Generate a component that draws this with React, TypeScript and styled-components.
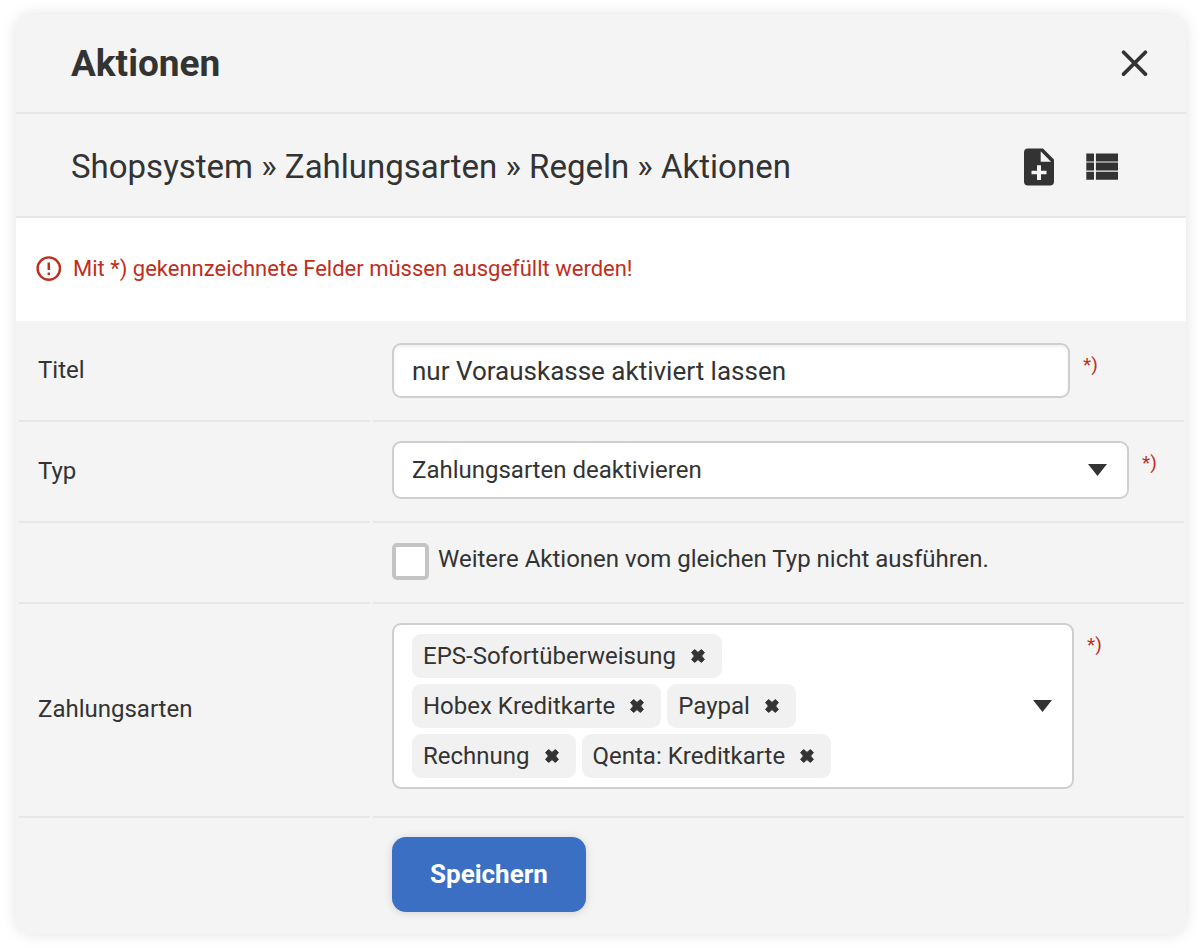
import React from 'react';
import styled, { createGlobalStyle, css } from 'styled-components';

const ink = '#333333';
const danger = '#bf2e1c';
const line = '#e7e7e7';
const fieldBorder = '#cfcfcf';

const GlobalStyle = createGlobalStyle`
  *, *::before, *::after { box-sizing: border-box; }
  body {
    margin: 0;
    background: #ffffff;
    color: ${ink};
    font-family: Roboto, 'Liberation Sans', sans-serif;
    font-size: 24px;
    line-height: 30px;
  }
  button, input, select { font: inherit; color: inherit; }
`;

const Dialog = styled.section`
  margin: 15px 14px 15px 16px;
  border-radius: 16px;
  background: #f4f4f4;
  box-shadow: 0 0 15px rgba(0, 0, 0, 0.12);
  overflow: hidden;
`;

const bar = css`
  display: flex;
  align-items: center;
  justify-content: space-between;
  border-bottom: 2px solid ${line};
`;

const TitleBar = styled.header`
  ${bar}
  height: 99px;
  padding: 0 32px 0 55px;
`;

const Title = styled.h1`
  margin: 0;
  font-size: 37px;
  line-height: 44px;
  font-weight: 700;
`;

const PathBar = styled.div`
  ${bar}
  height: 104px;
  padding: 3px 64px 0 55px;
`;

const PathTitle = styled.h2`
  margin: 0;
  font-size: 33px;
  line-height: 40px;
  font-weight: 400;
`;

const Tools = styled.div`
  display: flex;
  gap: 23px;
`;

const IconButton = styled.button`
  display: flex;
  align-items: center;
  justify-content: center;
  width: 40px;
  height: 40px;
  padding: 0;
  border: 0;
  background: none;
  cursor: pointer;
`;

const Notice = styled.p`
  display: flex;
  align-items: center;
  gap: 11px;
  height: 103px;
  margin: 0;
  padding: 0 20px 1px;
  background: #ffffff;
  color: ${danger};
  font-size: 22px;
`;

const Form = styled.form`
  padding: 0 2px 0 3px;
`;

const Row = styled.div`
  display: grid;
  grid-template-columns: 351px minmax(0, 1fr);
  column-gap: 3px;
`;

const cell = css`
  border-bottom: 2px solid ${line};
  ${Row}:last-child & { border-bottom: 0; }
`;

const LabelCell = styled.div`
  ${cell}
  display: flex;
  align-items: center;
  padding: 0 0 2px 19px;
`;

const FieldCell = styled.div<{ $top?: number; $bottom?: number }>`
  ${cell}
  display: flex;
  align-items: flex-start;
  gap: 13px;
  padding: ${p => p.$top ?? 19}px 19px ${p => p.$bottom ?? 22}px;
`;

const field = css`
  border: 2px solid ${fieldBorder};
  border-radius: 9px;
  background-color: #ffffff;
`;

const TextInput = styled.input`
  ${field}
  flex: 0 1 678px;
  min-width: 0;
  height: 55px;
  padding: 0 18px;
  font-size: 26px;
  box-shadow: inset 0 2px 3px rgba(0, 0, 0, 0.06);
`;

const SelectBox = styled.div`
  ${field}
  flex: 0 1 737px;
  min-width: 0;
  height: 58px;
  display: grid;
  align-items: center;
`;

const Select = styled.select`
  grid-area: 1 / 1;
  width: 100%;
  height: 100%;
  padding: 0 18px;
  border: 0;
  background: none;
  appearance: none;
`;

const SelectArrow = styled.span`
  grid-area: 1 / 1;
  justify-self: end;
  display: flex;
  margin-right: 20px;
  pointer-events: none;
`;

const MultiSelect = styled.div`
  ${field}
  flex: 0 1 682px;
  min-width: 0;
  display: flex;
  align-items: center;
  justify-content: space-between;
  padding: 9px 20px 9px 18px;
`;

const Chips = styled.ul`
  display: flex;
  flex-wrap: wrap;
  gap: 6px;
  max-width: 520px;
  margin: 0;
  padding: 0;
  list-style: none;
`;

const Chip = styled.li`
  display: flex;
  align-items: center;
  height: 44px;
  padding: 0 7px 0 11px;
  border-radius: 9px;
  background: #f1f1f1;
`;

const ChipRemove = styled.button`
  display: flex;
  align-items: center;
  justify-content: center;
  width: 34px;
  height: 34px;
  margin-left: 5px;
  padding: 0;
  border: 0;
  background: none;
  cursor: pointer;
`;

const ArrowButton = styled.button`
  display: flex;
  padding: 0;
  border: 0;
  background: none;
  cursor: pointer;
`;

const Required = styled.span`
  padding-top: 10px;
  color: ${danger};
  font-size: 19px;
  line-height: 24px;
`;

const CheckLabel = styled.label`
  display: flex;
  align-items: flex-start;
  gap: 9px;
  line-height: 33px;
`;

const CheckBox = styled.input`
  flex: none;
  width: 37px;
  height: 37px;
  margin: 0;
  border: 4px solid #c4c4c4;
  border-radius: 5px;
  background: #ffffff;
  appearance: none;
`;

const Save = styled.button`
  height: 75px;
  padding: 0 38px 2px;
  border: 0;
  border-radius: 14px;
  background: #3a6fc4;
  color: #ffffff;
  font-size: 26px;
  font-weight: 700;
  box-shadow: 0 1px 8px rgba(0, 0, 0, 0.14);
  cursor: pointer;
`;

const CloseIcon = () => (
  <svg width="28" height="28" viewBox="0 0 28 28" fill="none" stroke={ink} strokeWidth="3.7" aria-hidden="true">
    <path d="M3.600 2.300 25.400 24.100M25.400 2.300 3.600 24.100" strokeLinecap="round" />
  </svg>
);

const AddFileIcon = () => (
  <svg width="30" height="38" viewBox="0 0 30 38" aria-hidden="true">
    <path
      fill={ink}
      fillRule="evenodd"
      d="M4 .5H19L30 11.500V33.500A4 4 0 0 1 26 37.500H4A4 4 0 0 1 0 33.500V4.500A4 4 0 0 1 4 .500ZM16.700 3.300V13.700H27ZM13 17.300V22.700H7.500V26.300H13V32H17V26.300H22.500V22.700H17V17.300Z"
    />
  </svg>
);

const ListIcon = () => (
  <svg width="32" height="27" viewBox="0 0 32 27" fill={ink} aria-hidden="true">
    <path d="M.3 .5H8V8.500H.3ZM9.900 .5H32V8.500H9.900ZM.3 9.600H8V17.600H.3ZM9.900 9.600H32V17.600H9.900ZM.3 18.700H8V26.700H.3ZM9.900 18.700H32V26.700H9.900Z" />
  </svg>
);

const AlertIcon = () => (
  <svg width="26" height="26" viewBox="0 0 26 26" fill="none" aria-hidden="true">
    <circle cx="12.800" cy="12.600" r="11.200" stroke={danger} strokeWidth="2.400" />
    <path d="M12.800 6.600V14M12.800 16.400V18.900" stroke={danger} strokeWidth="2.500" />
  </svg>
);

const CaretIcon = () => (
  <svg width="19" height="12" viewBox="0 0 19 12" fill={ink} aria-hidden="true">
    <path d="M0 0H19L9.500 12Z" />
  </svg>
);

const RemoveIcon = () => (
  <svg width="14" height="14" viewBox="0 0 14 14" fill={ink} stroke={ink} strokeLinejoin="round" aria-hidden="true">
    <path d="M3.600.6 7 3.400 10.400.6 13.400 3.600 10.600 7 13.400 10.400 10.400 13.400 7 10.600 3.600 13.400.6 10.400 3.400 7 .6 3.600Z" />
  </svg>
);

const payments = ['EPS-Sofortüberweisung', 'Hobex Kreditkarte', 'Paypal', 'Rechnung', 'Qenta: Kreditkarte'];

export default function App() {
  return (
    <>
      <GlobalStyle />
      <Dialog aria-labelledby="dialog-title">
        <TitleBar>
          <Title id="dialog-title">Aktionen</Title>
          <IconButton type="button" aria-label="Schließen"><CloseIcon /></IconButton>
        </TitleBar>
        <PathBar>
          <PathTitle>Shopsystem » Zahlungsarten » Regeln » Aktionen</PathTitle>
          <Tools>
            <IconButton type="button" aria-label="Neu"><AddFileIcon /></IconButton>
            <IconButton type="button" aria-label="Liste"><ListIcon /></IconButton>
          </Tools>
        </PathBar>
        <Notice>
          <AlertIcon />
          Mit *) gekennzeichnete Felder müssen ausgefüllt werden!
        </Notice>
        <Form onSubmit={e => e.preventDefault()}>
          <Row>
            <LabelCell><label htmlFor="titel">Titel</label></LabelCell>
            <FieldCell $top={22}>
              <TextInput id="titel" type="text" defaultValue="nur Vorauskasse aktiviert lassen" />
              <Required>*)</Required>
            </FieldCell>
          </Row>
          <Row>
            <LabelCell><label htmlFor="typ">Typ</label></LabelCell>
            <FieldCell>
              <SelectBox>
                <Select id="typ" defaultValue="deaktivieren">
                  <option value="deaktivieren">Zahlungsarten deaktivieren</option>
                </Select>
                <SelectArrow><CaretIcon /></SelectArrow>
              </SelectBox>
              <Required>*)</Required>
            </FieldCell>
          </Row>
          <Row>
            <LabelCell />
            <FieldCell $top={20}>
              <CheckLabel>
                <CheckBox type="checkbox" />
                Weitere Aktionen vom gleichen Typ nicht ausführen.
              </CheckLabel>
            </FieldCell>
          </Row>
          <Row>
            <LabelCell id="zahlungsarten">Zahlungsarten</LabelCell>
            <FieldCell $bottom={27}>
              <MultiSelect role="group" aria-labelledby="zahlungsarten">
                <Chips>
                  {payments.map(name => (
                    <Chip key={name}>
                      {name}
                      <ChipRemove type="button" aria-label={`${name} entfernen`}><RemoveIcon /></ChipRemove>
                    </Chip>
                  ))}
                </Chips>
                <ArrowButton type="button" aria-label="Auswahl öffnen"><CaretIcon /></ArrowButton>
              </MultiSelect>
              <Required>*)</Required>
            </FieldCell>
          </Row>
          <Row>
            <LabelCell />
            <FieldCell>
              <Save type="submit">Speichern</Save>
            </FieldCell>
          </Row>
        </Form>
      </Dialog>
    </>
  );
}
